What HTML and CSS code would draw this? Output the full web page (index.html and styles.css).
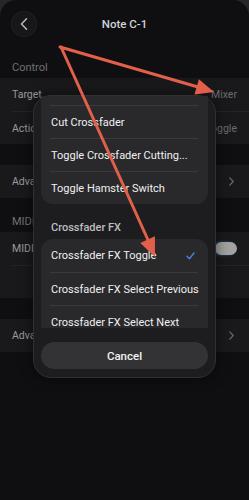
FILE: index.html
```html
<!DOCTYPE html>
<html>
<head>
<meta charset="utf-8">
<link rel="stylesheet" href="styles.css">
</head>
<body>
<div class="sheet">
  <header class="nav">
    <div class="back">
      <svg width="8" height="12" viewBox="0 0 8 12"><polyline points="6.5,0.8 1.5,6 6.5,11.2" fill="none" stroke="#b9b9bd" stroke-width="1.5" stroke-linecap="round" stroke-linejoin="round"/></svg>
    </div>
    <div class="title">Note C-1</div>
  </header>

  <div class="label">Control</div>
  <div class="group">
    <div class="row"><span>Target</span><span class="val">Mixer</span></div>
    <div class="row"><span>Action</span><span class="val">Toggle</span></div>
  </div>
  <div class="group spaced">
    <div class="row"><span>Advanced</span><svg class="chev" width="5" height="9" viewBox="0 0 5 9"><polyline points="0.8,0.8 4.2,4.5 0.8,8.2" fill="none" stroke="#6a6a6e" stroke-width="1.2" stroke-linecap="round" stroke-linejoin="round"/></svg></div>
  </div>

  <div class="label">MIDI</div>
  <div class="group">
    <div class="row"><span>MIDI</span><span class="switch"></span></div>
    <div class="row"></div>
  </div>
  <div class="group spaced">
    <div class="row"><span>Advanced</span><svg class="chev" width="5" height="9" viewBox="0 0 5 9"><polyline points="0.8,0.8 4.2,4.5 0.8,8.2" fill="none" stroke="#6a6a6e" stroke-width="1.2" stroke-linecap="round" stroke-linejoin="round"/></svg></div>
  </div>
</div>

<div class="modal">
  <div class="scroll">
    <div class="mgroup first">
      <div class="mtop"></div>
      <div class="mrow">Cut Crossfader</div>
      <div class="mrow">Toggle Crossfader Cutting...</div>
      <div class="mrow">Toggle Hamster Switch</div>
    </div>
    <div class="mlabel">Crossfader FX</div>
    <div class="mgroup">
      <div class="mrow"><span>Crossfader FX Toggle</span><svg class="check" width="9" height="8" viewBox="0 0 9 8"><polyline points="1,4.3 3.4,6.8 8,1" fill="none" stroke="#4d7fe0" stroke-width="1.4" stroke-linecap="round" stroke-linejoin="round"/></svg></div>
      <div class="mrow">Crossfader FX Select Previous</div>
      <div class="mrow">Crossfader FX Select Next</div>
    </div>
  </div>
  <div class="cancel">Cancel</div>
</div>

<svg class="arrows" width="249" height="500" viewBox="0 0 249 500">
  <g stroke="#e2604a" stroke-width="3" stroke-linecap="round" fill="none">
    <line x1="60" y1="47" x2="198" y2="87"/>
    <line x1="61" y1="47" x2="148" y2="240"/>
  </g>
  <g fill="#e2604a">
    <polygon points="214,92 194.5,94.6 198.9,79.2"/>
    <polygon points="155,257 140.3,242.9 154.9,236.3"/>
  </g>
</svg>
</body>
</html>
```

FILE: styles.css
```css
html, body {
  margin: 0;
  padding: 0;
}
body {
  width: 249px;
  height: 500px;
  background: #262628;
  font-family: "Roboto", "Noto Sans", sans-serif;
  overflow: hidden;
  position: relative;
}
.sheet {
  height: 500px;
  background: #0f0f11;
  border-radius: 16px 16px 0 0;
}
.nav {
  height: 44px;
  position: relative;
  display: flex;
  align-items: center;
  justify-content: center;
}
.back {
  position: absolute;
  left: 11px;
  top: 11px;
  width: 26px;
  height: 26px;
  border-radius: 50%;
  background: #17171a;
  box-shadow: inset 0 0 0 1px #202023;
  display: flex;
  align-items: center;
  justify-content: center;
}
.back svg {
  margin-left: -1px;
}
.title {
  color: #d2d2d5;
  font-size: 11.5px;
  font-weight: 500;
  padding-top: 4px;
}
.label {
  height: 34px;
  box-sizing: border-box;
  padding: 17px 12px 3px;
  line-height: 14px;
  font-size: 11px;
  color: #6f6f73;
}
.group {
  background: #19191b;
}
.group.spaced {
  margin-top: 21px;
}
.row {
  height: 33px;
  box-sizing: border-box;
  margin-left: 12px;
  padding-right: 12px;
  display: flex;
  align-items: center;
  justify-content: space-between;
  font-size: 10.5px;
  color: #9a9a9e;
  white-space: nowrap;
}
.row + .row {
  border-top: 1px solid #242426;
}
.val {
  color: #6c6c70;
}
.chev {
  margin-right: 3px;
}
.switch {
  width: 22px;
  height: 13px;
  border-radius: 7px;
  background: #a2a29e;
  box-shadow: -2px 0 3px #2e4f9c;
  margin-top: -1px;
}

.modal {
  position: absolute;
  left: 33px;
  top: 95px;
  width: 183px;
  height: 283px;
  box-sizing: border-box;
  border: 1px solid #303033;
  border-radius: 18px;
  background: #1d1d1f;
  padding: 0 7px 8px;
  display: flex;
  flex-direction: column;
  box-shadow: 0 0 14px rgba(0, 0, 0, 0.55);
}
.scroll {
  height: 232px;
  overflow: hidden;
  flex: none;
}
.mgroup {
  background: #29292b;
  border-radius: 12px;
}
.mgroup.first {
  border-radius: 0 0 12px 12px;
}
.mtop {
  height: 9px;
}
.mrow {
  height: 33px;
  box-sizing: border-box;
  margin: 0 10px 0 9px;
  padding: 0 3px 0 1px;
  display: flex;
  align-items: center;
  justify-content: space-between;
  font-size: 11px;
  color: #f0f0f2;
  white-space: nowrap;
  border-top: 1px solid #3a3a3d;
}
.mgroup:not(.first) .mrow:first-child {
  border-top: none;
}
.mlabel {
  height: 35px;
  box-sizing: border-box;
  padding: 17px 10px 4px;
  line-height: 14px;
  font-size: 11px;
  font-weight: 500;
  color: #bdbdc1;
  white-space: nowrap;
}
.cancel {
  margin-top: 14px;
  height: 27px;
  border-radius: 14px;
  background: #333336;
  color: #f2f2f4;
  font-size: 11.5px;
  font-weight: 500;
  display: flex;
  align-items: center;
  justify-content: center;
}
.arrows {
  position: absolute;
  left: 0;
  top: 0;
  pointer-events: none;
}
```
